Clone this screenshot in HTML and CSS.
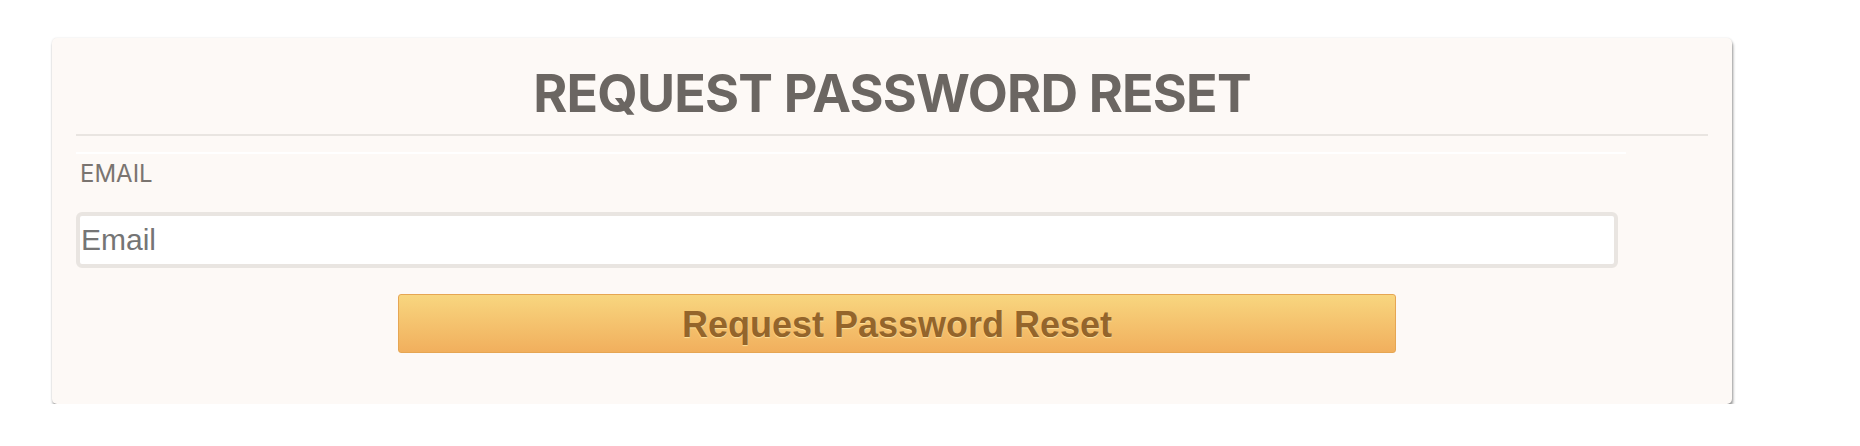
FILE: index.html
```html
<!DOCTYPE html>
<html lang="en">
<head>
<meta charset="utf-8">
<title>Request Password Reset</title>
<link rel="stylesheet" href="styles.css">
</head>
<body>
<div class="page">
  <div class="card">
    <h1 class="title">REQUEST PASSWORD RESET</h1>
    <form class="form" onsubmit="return false;">
      <div class="divider"></div>
      <label class="label" for="email">EMAIL</label>
      <input class="input" id="email" type="email" placeholder="Email">
      <div class="actions">
        <button class="btn" type="submit">Request Password Reset</button>
      </div>
    </form>
  </div>
</div>
</body>
</html>
```
FILE: styles.css
```css
html, body {
  margin: 0;
  padding: 0;
  background: #ffffff;
}

.page {
  padding: 38px 0 0 52px;
}

.card {
  box-sizing: border-box;
  width: 1680px;
  background: #fdf9f6;
  border-radius: 5px;
  box-shadow: 1px 3px 3px rgba(0, 0, 0, 0.4), 0 0 2px rgba(0, 0, 0, 0.12);
  padding: 24px 24px 51px 24px;
}

.title {
  margin: 0;
  font-family: Inter, "Liberation Sans", sans-serif;
  font-weight: 700;
  font-size: 52px;
  letter-spacing: -0.8px;
  line-height: 63px;
  color: #6b6662;
  text-align: center;
  padding-bottom: 9px;
  border-bottom: 2px solid #e9e5e1;
}

.form {
  display: flex;
  flex-direction: column;
  align-items: flex-start;
  margin: 0;
}

.divider {
  width: 1550px;
  border-top: 2px solid #ffffff;
  margin-top: 16px;
}

.label {
  display: block;
  margin-top: 5px;
  margin-left: 4px;
  font-family: Inter, "Liberation Sans", sans-serif;
  font-size: 24px;
  line-height: 29px;
  color: #7a7470;
}

.input {
  box-sizing: border-box;
  width: 1542px;
  height: 56px;
  margin-top: 24px;
  border: 4px solid #e9e5e1;
  border-radius: 6px;
  background: #ffffff;
  padding: 0 0 0 1px;
  font-family: "Liberation Sans", Arial, sans-serif;
  font-size: 30px;
  color: #333333;
  outline: none;
}

.input::placeholder {
  color: #757575;
}

.actions {
  display: flex;
  justify-content: center;
  width: 100%;
  margin-top: 26px;
  padding-left: 10px;
  box-sizing: border-box;
}

.btn {
  box-sizing: border-box;
  width: 998px;
  height: 59px;
  border: 1px solid #e6a653;
  border-radius: 3px;
  background: linear-gradient(to bottom, #f8d67f, #f1af5d);
  font-family: "Liberation Sans", Arial, sans-serif;
  font-weight: 700;
  font-size: 36px;
  color: #94652b;
  text-shadow: 0 1px 1px rgba(255, 235, 170, 0.8);
  padding: 3px 0 0 0;
  cursor: pointer;
}
```
